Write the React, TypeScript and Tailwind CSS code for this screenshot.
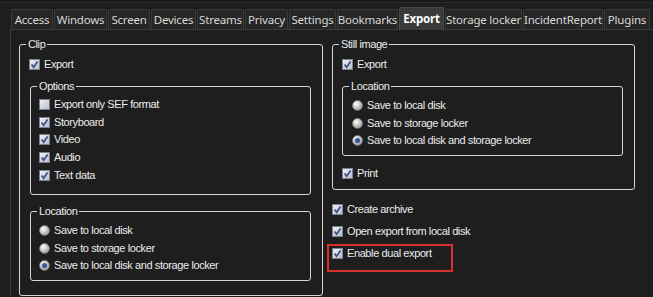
import React from "react";

const font = "font-['Liberation_Sans',Arial,sans-serif] text-[11px] tracking-[-0.4px] text-[#ececec]";

function Check({ checked }: { checked: boolean }) {
  return (
    <svg width="11" height="11" viewBox="0 0 11 11" className="shrink-0">
      <defs>
        <linearGradient id="cbg" x1="0" y1="0" x2="1" y2="1">
          <stop offset="0" stopColor="#f2f4f8" />
          <stop offset="1" stopColor="#b4bac6" />
        </linearGradient>
      </defs>
      <rect x="0.5" y="0.5" width="10" height="10" fill="url(#cbg)" stroke="#7b828f" />
      {checked && (
        <path d="M2.6 5.4 L4.6 8.2 L8.6 2.4" stroke="#3b4f88" strokeWidth="1.7" fill="none" />
      )}
    </svg>
  );
}

function Radio({ selected }: { selected: boolean }) {
  return (
    <svg width="11" height="11" viewBox="0 0 11 11" className="shrink-0">
      <defs>
        <radialGradient id="rdg" cx="0.38" cy="0.35" r="0.7">
          <stop offset="0" stopColor="#ffffff" />
          <stop offset="1" stopColor="#989898" />
        </radialGradient>
      </defs>
      <circle cx="5.5" cy="5.5" r="5" fill="url(#rdg)" stroke="#7c7c7c" strokeWidth="0.6" />
      {selected && <circle cx="5.5" cy="5.5" r="2.6" fill="#3d5a9c" />}
    </svg>
  );
}

function CheckRow({ label, checked = true, h = "h-[18px]" }: { label: string; checked?: boolean; h?: string }) {
  return (
    <div className={`flex items-center gap-[4px] ${h}`}>
      <Check checked={checked} />
      <span className="leading-[13px]">{label}</span>
    </div>
  );
}

function RadioRow({ label, selected = false }: { label: string; selected?: boolean }) {
  return (
    <div className="flex items-center gap-[4px] h-[17.5px]">
      <Radio selected={selected} />
      <span className="leading-[13px]">{label}</span>
    </div>
  );
}

function Group({ title, className, children }: { title: string; className?: string; children: React.ReactNode }) {
  return (
    <div className={`relative border border-[#d6d6d6] rounded-[3px] ${className ?? ""}`}>
      <span className="absolute left-[6px] top-[-7px] px-[2px] bg-[#1e1e1e] leading-[13px]">{title}</span>
      {children}
    </div>
  );
}

const tabs: { name: string; w: string; active?: boolean }[] = [
  { name: "Access", w: "w-[42px]" },
  { name: "Windows", w: "w-[53px]" },
  { name: "Screen", w: "w-[42px]" },
  { name: "Devices", w: "w-[45px]" },
  { name: "Streams", w: "w-[47px]" },
  { name: "Privacy", w: "w-[43px]" },
  { name: "Settings", w: "w-[47px]" },
  { name: "Bookmarks", w: "w-[61px]" },
  { name: "Export", w: "w-[45px]", active: true },
  { name: "Storage locker", w: "w-[77px]" },
  { name: "IncidentReport", w: "w-[80px]" },
  { name: "Plugins", w: "w-[46px]" },
];

export default function App() {
  return (
    <div className="w-[653px] h-[297px] bg-[#1e1e1e] overflow-hidden">
      <div className="h-[3px] border-b border-[#2c2c2c] bg-[#1a1a1a]" />
      <div className="flex items-end h-[26px] pl-[11px] gap-[1px] font-['Noto_Sans','Open_Sans',sans-serif] text-[11.5px]">
        {tabs.map((t) => (
          <div
            key={t.name}
            className={`${t.w} flex items-center justify-center border border-b-0 rounded-t-[2px] ${
              t.active
                ? "h-[22px] bg-[#3a3a3a] border-[#4a4a4a] text-white font-bold"
                : "h-[20px] bg-[#262626] border-[#3a3a3a] text-[#d6d6d6]"
            }`}
          >
            <span className="whitespace-nowrap tracking-[-0.2px]">{t.name}</span>
          </div>
        ))}
      </div>
      <div className={`ml-[10px] h-[268px] border-l border-t border-[#3a3a3a] pl-[8px] pt-[14px] flex gap-[9px] ${font}`}>
        {/* Left column */}
        <Group title="Clip" className="w-[304px] h-[252px] pt-[10px] pl-[9px] pr-[11px]">
          <CheckRow label="Export" />
          <Group title="Options" className="mt-[13px] ml-[1px] pt-[9px] pl-[8px] pb-[10px]">
            <CheckRow label="Export only SEF format" checked={false} h="h-[17.6px]" />
            <CheckRow label="Storyboard" h="h-[17.6px]" />
            <CheckRow label="Video" h="h-[17.6px]" />
            <CheckRow label="Audio" h="h-[17.6px]" />
            <CheckRow label="Text data" h="h-[17.6px]" />
          </Group>
          <Group title="Location" className="mt-[16px] ml-[1px] pt-[10px] pl-[8px] pb-[6px]">
            <RadioRow label="Save to local disk" />
            <RadioRow label="Save to storage locker" />
            <RadioRow label="Save to local disk and storage locker" selected />
          </Group>
        </Group>

        {/* Right column */}
        <div className="w-[303px] flex flex-col">
          <Group title="Still image" className="pt-[10px] pl-[9px] pr-[11px] pb-[6px]">
            <CheckRow label="Export" />
            <Group title="Location" className="mt-[13px] pt-[10px] pl-[9px] pb-[5px]">
              <RadioRow label="Save to local disk" />
              <RadioRow label="Save to storage locker" />
              <RadioRow label="Save to local disk and storage locker" selected />
            </Group>
            <div className="mt-[9px]">
              <CheckRow label="Print" />
            </div>
          </Group>
          <div className="mt-[11px] flex flex-col gap-[4px]">
            <CheckRow label="Create archive" />
            <CheckRow label="Open export from local disk" />
            <div className="relative">
              <CheckRow label="Enable dual export" />
              <span className="absolute left-[-5px] top-[-1px] w-[126px] h-[28px] border-2 border-[#d8312c]" />
            </div>
          </div>
        </div>
      </div>
    </div>
  );
}
